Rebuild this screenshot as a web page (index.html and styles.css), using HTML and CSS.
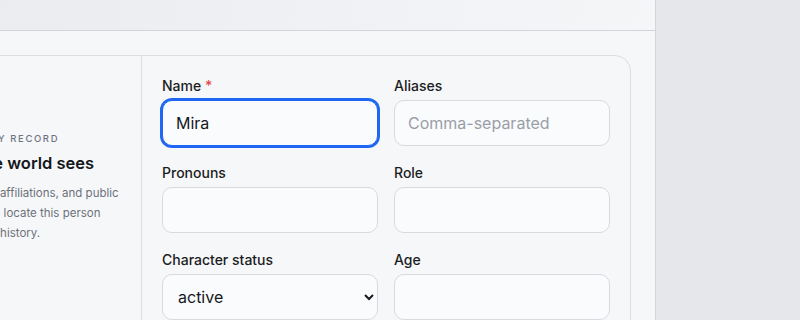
FILE: index.html
```html
<!DOCTYPE html>
<html lang="en">
<head>
    <meta charset="UTF-8" />
    <title>Character record</title>
    <link rel="stylesheet" href="styles.css">
</head>
<body>
    <div class="shell">
        <main class="main">
            <header class="topbar"></header>

            <div class="content">
                <section class="card">
                    <aside class="card-intro">
                        <div class="eyebrow">1 · Identity record</div>
                        <h2>What the world sees</h2>
                        <p>Name, rank, affiliations, and public posts let you locate this person across all of history.</p>
                    </aside>

                    <form class="fields">
                        <div class="field">
                            <label for="name">Name <span class="req">*</span></label>
                            <input id="name" class="is-focused" type="text" value="Mira" />
                        </div>
                        <div class="field">
                            <label for="aliases">Aliases</label>
                            <input id="aliases" type="text" placeholder="Comma-separated" />
                        </div>
                        <div class="field">
                            <label for="pronouns">Pronouns</label>
                            <input id="pronouns" type="text" />
                        </div>
                        <div class="field">
                            <label for="role">Role</label>
                            <input id="role" type="text" />
                        </div>
                        <div class="field">
                            <label for="status">Character status</label>
                            <select id="status">
                                <option>active</option>
                                <option>inactive</option>
                                <option>deceased</option>
                            </select>
                        </div>
                        <div class="field">
                            <label for="age">Age</label>
                            <input id="age" type="text" />
                        </div>
                    </form>
                </section>
            </div>
        </main>
        <div class="side"></div>
    </div>
</body>
</html>
```

FILE: styles.css
```css
body {
    margin: 0;
    font-family: Inter, "Noto Sans", sans-serif;
    background: #e6e7eb;
    color: #16181d;
}

.shell {
    display: flex;
    height: 320px;
    overflow: hidden;
}

.main {
    width: 655px;
    flex-shrink: 0;
    background: #f6f7f9;
    border-right: 1px solid #d3d5dc;
    overflow: hidden;
}

.side {
    flex: 1;
    background: #e6e7eb;
}

.topbar {
    height: 30px;
    border-bottom: 1px solid #d2d4dc;
    background: linear-gradient(100deg, #ebecf0 0%, #f0f1f4 50%, #f5f6f8 100%);
}

.content {
    padding-top: 24px;
}

.card {
    display: grid;
    grid-template-columns: 251px 1fr;
    margin-left: -110px;
    margin-right: 24px;
    border: 1px solid #dcdee3;
    border-radius: 16px;
    background: #f6f7f9;
}

.card-intro {
    padding: 77px 16px 0 40px;
    border-right: 1px solid #dcdee3;
}

.eyebrow {
    font-size: 9.5px;
    font-weight: 500;
    letter-spacing: 1.6px;
    text-transform: uppercase;
    color: #6f7585;
}

.card-intro h2 {
    margin: 7px 0 0;
    font-size: 16.5px;
    font-weight: 600;
    line-height: 24px;
    color: #15171c;
}

.card-intro p {
    margin: 8px 0 0;
    font-size: 11.5px;
    line-height: 20px;
    color: #6d717a;
}

.fields {
    display: grid;
    grid-template-columns: 1fr 1fr;
    column-gap: 16px;
    row-gap: 17px;
    padding: 20px;
}

.field label {
    display: block;
    height: 19px;
    margin-bottom: 5px;
    font-size: 14px;
    font-weight: 450;
    line-height: 19px;
    color: #1b1d22;
}

.req {
    color: #e5484d;
}

.field input, .field select {
    display: block;
    box-sizing: border-box;
    width: 100%;
    height: 46px;
    padding: 0 13px;
    border: 1px solid #d8dae0;
    border-radius: 10px;
    background: #fafbfd;
    font-family: inherit;
    font-size: 16px;
    color: #16181d;
    outline: none;
}

.field input::placeholder {
    color: #9a9ea8;
}

.field select {
    padding: 0 8px 0 11px;
}

.field input.is-focused {
    border-color: #1f67f2;
    box-shadow: 0 0 0 2px #1f67f2;
}
```
